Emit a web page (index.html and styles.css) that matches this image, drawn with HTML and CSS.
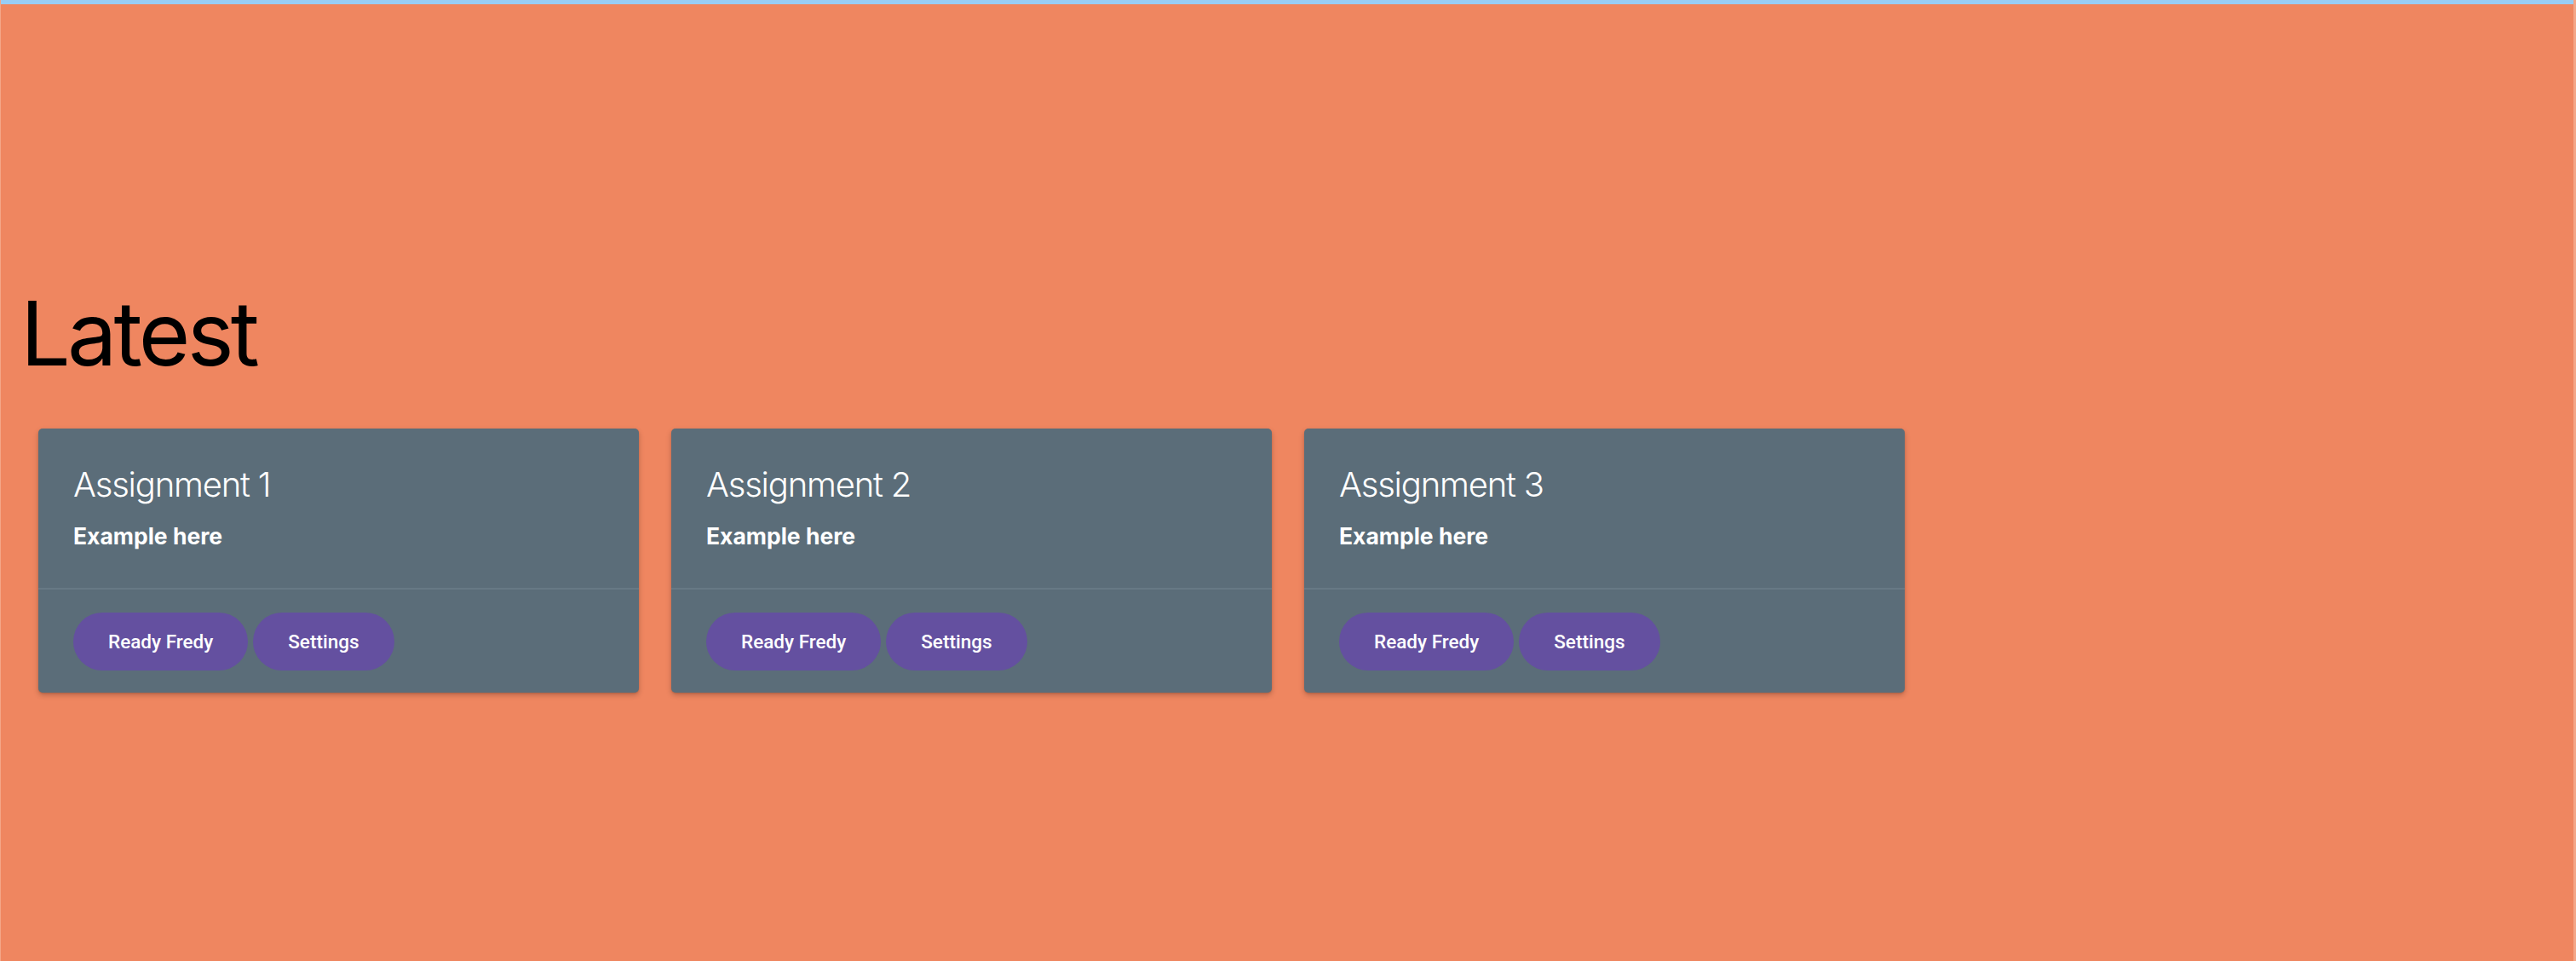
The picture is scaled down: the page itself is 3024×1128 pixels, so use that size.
FILE: index.html
```html
<!DOCTYPE html>
<html lang="en">
<head>
<meta charset="utf-8">
<title>Latest</title>
<link rel="stylesheet" href="styles.css">
</head>
<body>
<div class="frame">
  <div class="topbar"></div>
  <main class="page">
    <h1 class="heading">Latest</h1>
    <div class="cards">
      <section class="card">
        <div class="card-header">
          <h2 class="card-title">Assignment 1</h2>
          <p class="card-subtitle">Example here</p>
        </div>
        <div class="card-actions">
          <button class="btn">Ready Fredy</button>
          <button class="btn">Settings</button>
        </div>
      </section>
      <section class="card">
        <div class="card-header">
          <h2 class="card-title">Assignment 2</h2>
          <p class="card-subtitle">Example here</p>
        </div>
        <div class="card-actions">
          <button class="btn">Ready Fredy</button>
          <button class="btn">Settings</button>
        </div>
      </section>
      <section class="card">
        <div class="card-header">
          <h2 class="card-title">Assignment 3</h2>
          <p class="card-subtitle">Example here</p>
        </div>
        <div class="card-actions">
          <button class="btn">Ready Fredy</button>
          <button class="btn">Settings</button>
        </div>
      </section>
    </div>
  </main>
</div>
</body>
</html>
```
FILE: styles.css
```css
html, body {
  margin: 0;
  padding: 0;
  height: 100%;
}
body {
  background: #ef8660;
  font-family: Inter, "Liberation Sans", sans-serif;
  overflow: hidden;
}
.frame {
  height: 1128px;
  box-sizing: border-box;
  border-left: 1px solid #f4a687;
  border-right: 3px solid #f4a687;
  display: flex;
  flex-direction: column;
}
.topbar {
  height: 5px;
  background: #99cdf5;
  flex: none;
}
.page {
  padding: 324px 0 0 23px;
}
.heading {
  margin: 0;
  font-family: Inter, "Liberation Sans", sans-serif;
  font-weight: 400;
  font-size: 104px;
  line-height: 125px;
  color: #000;
  letter-spacing: -3.8px;
}
.cards {
  display: flex;
  gap: 38px;
  margin: 49px 0 0 21px;
}
.card {
  width: 705px;
  background: #5b6d79;
  border-radius: 5px;
  box-shadow: 0 3px 6px rgba(0, 0, 0, 0.22), 0 1px 2px rgba(0, 0, 0, 0.12);
  color: #fff;
}
.card-header {
  padding: 42px 41px 45px;
  border-bottom: 2px solid #677985;
}
.card-title {
  margin: 0;
  font-weight: 300;
  font-size: 40px;
  line-height: 48px;
  letter-spacing: -1.2px;
}
.card-subtitle {
  margin: 21px 0 0;
  font-weight: 700;
  font-size: 26.5px;
  line-height: 31px;
}
.card-actions {
  display: flex;
  gap: 6px;
  padding: 27px 41px 26px;
}
.btn {
  height: 68px;
  padding: 0 41px;
  border: none;
  border-radius: 34px;
  background: #6450a0;
  color: #fff;
  font-family: Roboto, "Liberation Sans", sans-serif;
  font-weight: 500;
  font-size: 22.5px;
  cursor: pointer;
}
```
